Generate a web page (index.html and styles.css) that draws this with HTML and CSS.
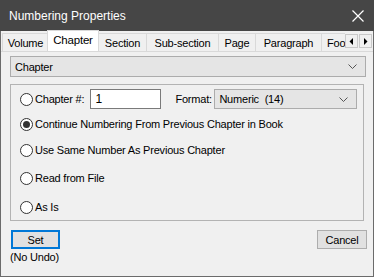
FILE: index.html
```html
<!DOCTYPE html>
<html>
<head>
<meta charset="utf-8">
<link rel="stylesheet" href="styles.css">
</head>
<body>
<div class="window">
  <div class="titlebar">
    <span class="title">Numbering Properties</span>
    <svg class="close" width="12" height="12" viewBox="0 0 12 12"><path d="M0.5 0.5 L11.5 11.5 M11.5 0.5 L0.5 11.5" stroke="#fff" stroke-width="1.2" fill="none"/></svg>
  </div>
  <div class="tabs">
    <div class="tab t-volume">Volume</div>
    <div class="tab sel t-chapter">Chapter</div>
    <div class="tab t-section">Section</div>
    <div class="tab t-sub">Sub-section</div>
    <div class="tab t-page">Page</div>
    <div class="tab t-para">Paragraph</div>
    <div class="tab t-foo">Foo</div>
    <div class="arrows">
      <div class="arrow"><svg width="5" height="7" viewBox="0 0 5 7"><path d="M4 0 L0.5 3.5 L4 7 Z" fill="#000"/></svg></div>
      <div class="arrow"><svg width="5" height="7" viewBox="0 0 5 7"><path d="M1 0 L4.5 3.5 L1 7 Z" fill="#000"/></svg></div>
    </div>
  </div>
  <div class="page">
    <div class="combo wide">
      <span>Chapter</span>
      <svg class="chev" width="9" height="5" viewBox="0 0 9 5"><path d="M0.5 0.5 L4.5 4.5 L8.5 0.5" stroke="#555" stroke-width="1" fill="none"/></svg>
    </div>
    <div class="group">
      <div class="row r1">
        <span class="radio"></span><span class="label">Chapter #:</span>
        <div class="textbox">1</div>
        <span class="fmt">Format:</span>
        <div class="combo small">
          <span>Numeric&nbsp; (14)</span>
          <svg class="chev" width="9" height="5" viewBox="0 0 9 5"><path d="M0.5 0.5 L4.5 4.5 L8.5 0.5" stroke="#555" stroke-width="1" fill="none"/></svg>
        </div>
      </div>
      <div class="row r2"><span class="radio on"></span><span class="label">Continue Numbering From Previous Chapter in Book</span></div>
      <div class="row r3"><span class="radio"></span><span class="label">Use Same Number As Previous Chapter</span></div>
      <div class="row r4"><span class="radio"></span><span class="label">Read from File</span></div>
      <div class="row r5"><span class="radio"></span><span class="label">As Is</span></div>
    </div>
    <div class="bottom">
      <div class="left">
        <div class="btn set">Set</div>
        <div class="noundo">(No Undo)</div>
      </div>
      <div class="btn cancel">Cancel</div>
    </div>
  </div>
</div>
</body>
</html>
```
FILE: styles.css
```css
html, body { margin: 0; padding: 0; background: #ffffff; }
body { width: 377px; height: 278px; overflow: hidden; font-family: "Liberation Sans", Arial, sans-serif; font-size: 11px; color: #000; }
.window { width: 374px; height: 277px; box-sizing: border-box; background: #f0f0f0; border: 1px solid #6b6b6b; border-top: none; display: flex; flex-direction: column; }
.titlebar { height: 31px; background: #464646; color: #fff; display: flex; align-items: center; justify-content: space-between; padding: 0 6px 0 9px; flex: none; margin: 0 -1px; }
.title { font-size: 12px; }
.close { margin-right: 4px; }
.tabs { height: 20px; display: flex; align-items: flex-end; padding-left: 1px; position: relative; flex: none; }
.tab { height: 18px; box-sizing: border-box; border: 1px solid #d9d9d9; border-bottom: none; border-right: none; background: #f0f0f0; display: flex; align-items: center; justify-content: center; white-space: nowrap; overflow: hidden; letter-spacing: -0.2px; }
.tab.sel { height: 21px; background: #ffffff; border-right: 1px solid #d9d9d9; margin: 0 -1px 0 -1px; position: relative; z-index: 1; padding-bottom: 2px; font-size: 11.5px; }
.t-volume { width: 46px; }
.t-chapter { width: 52px; }
.t-section { width: 48px; }
.t-sub { width: 72px; }
.t-page { width: 37px; }
.t-para { width: 66px; }
.t-foo { width: 24px; justify-content: flex-start; padding-left: 5px; }
.arrows { display: flex; align-self: flex-start; margin-top: 3px; }
.arrow { width: 13px; height: 14px; box-sizing: border-box; border: 1px solid #c9c9c9; background: #f0f0f0; display: flex; align-items: center; justify-content: center; margin-right: 1px; }
.page { flex: 1; border-top: 1px solid #d9d9d9; padding: 4px 6px 0 9px; display: flex; flex-direction: column; }
.combo { box-sizing: border-box; background: #e5e5e5; border: 1px solid #acacac; display: flex; align-items: center; justify-content: space-between; padding: 0 8px 0 4px; letter-spacing: -0.2px; }
.combo.wide { height: 21px; width: 356px; }
.combo.small { height: 20px; width: 143px; }
.group { margin-top: 7px; width: 354px; height: 137px; box-sizing: border-box; border: 1px solid #b3b3b3; padding: 4px 0 0 9px; display: flex; flex-direction: column; }
.row { height: 20px; display: flex; align-items: center; letter-spacing: -0.2px; white-space: nowrap; }
.r2 { margin-top: 5px; }
.r3 { margin-top: 6px; }
.r4 { margin-top: 8px; }
.r5 { margin-top: 9px; }
.radio { width: 13px; height: 13px; box-sizing: border-box; border: 1px solid #333; border-radius: 50%; background: #fff; margin-right: 2px; flex: none; position: relative; }
.radio.on::after { content: ""; position: absolute; left: 2px; top: 2px; width: 7px; height: 7px; border-radius: 50%; background: #333; }
.textbox { margin-left: 6px; width: 71px; height: 20px; box-sizing: border-box; border: 1px solid #7a7a7a; background: #fff; padding-left: 4px; display: flex; align-items: center; font-size: 12px; }
.fmt { margin-left: 14px; width: 39px; flex: none; }
.bottom { margin-top: 9px; display: flex; justify-content: space-between; align-items: flex-start; width: 357px; }
.left { display: flex; flex-direction: column; }
.btn { height: 19px; box-sizing: border-box; background: #e1e1e1; display: flex; align-items: center; justify-content: center; letter-spacing: -0.2px; }
.set { width: 49px; border: 2px solid #0078d7; margin-left: 1px; }
.cancel { width: 50px; border: 1px solid #adadad; }
.noundo { margin-top: 2px; letter-spacing: -0.2px; }
```
